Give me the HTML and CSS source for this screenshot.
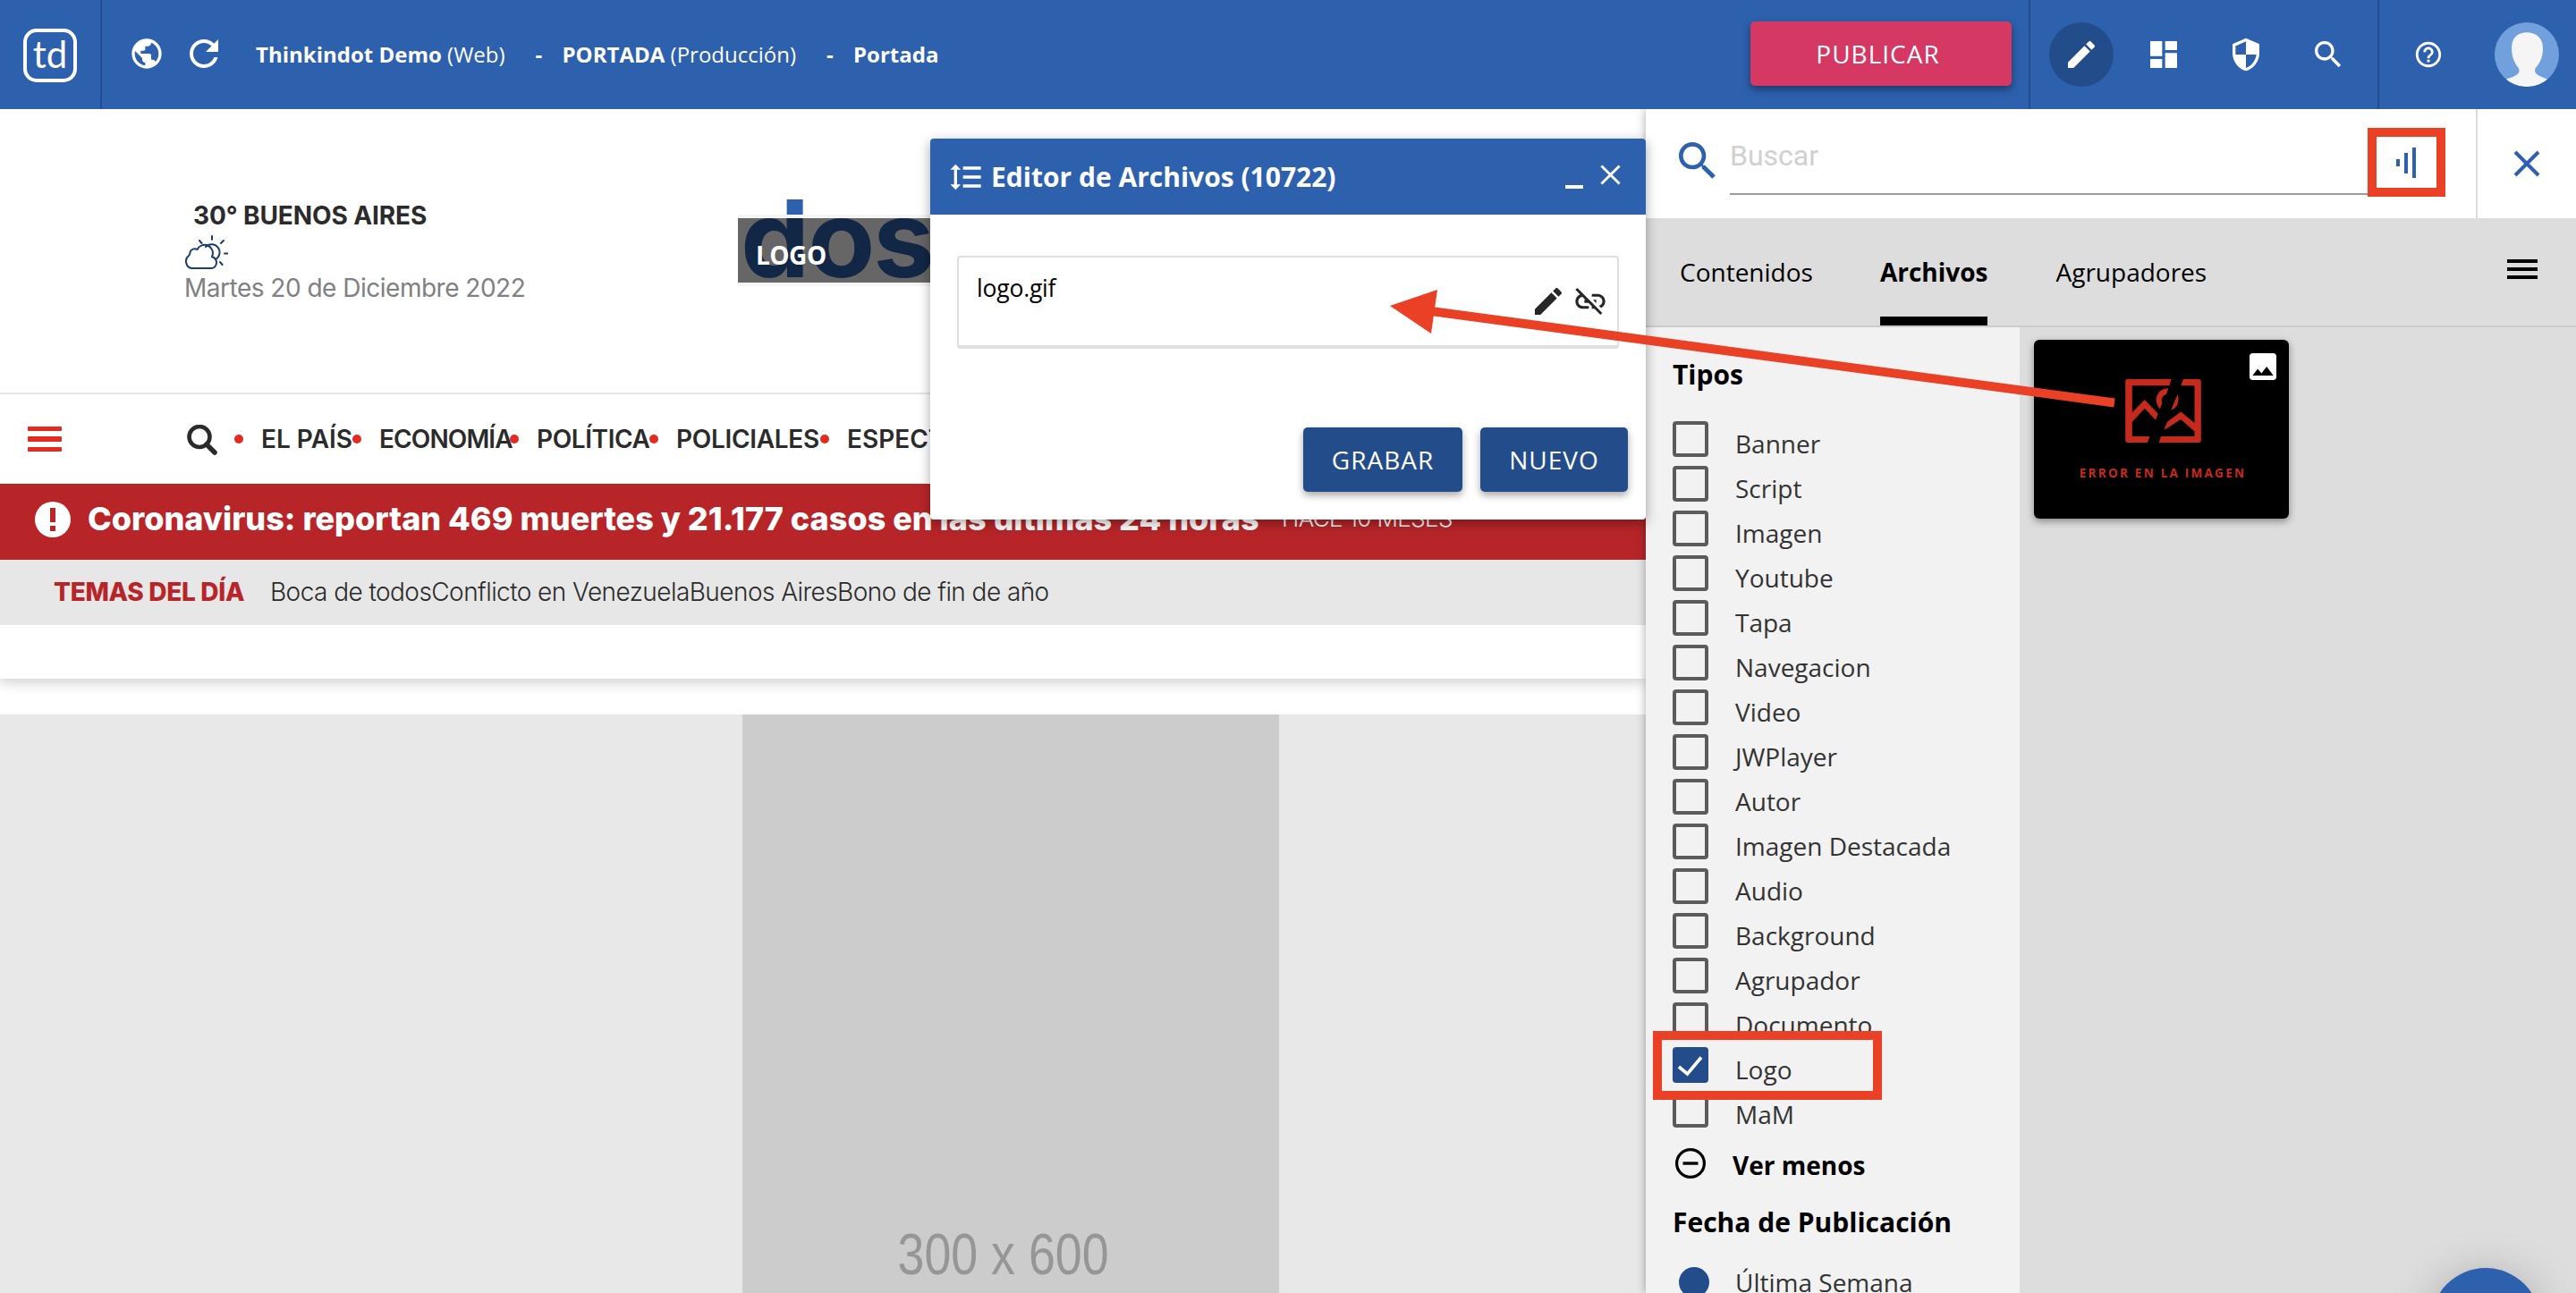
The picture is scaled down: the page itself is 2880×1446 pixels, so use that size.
FILE: index.html
```html
<!DOCTYPE html>
<html lang="es">
<head>
<meta charset="utf-8">
<title>Thinkindot Demo - Portada</title>
<link rel="stylesheet" href="styles.css">
</head>
<body>
<div class="app">
  <header class="topbar">
    <div class="brand"><div class="brand-box">td</div></div>
    <svg class="icon ic-40 globe" viewBox="0 0 24 24"><path d="M12 2C6.48 2 2 6.48 2 12s4.48 10 10 10 10-4.48 10-10S17.52 2 12 2zm-1 17.93c-3.95-.49-7-3.85-7-7.93 0-.62.08-1.21.21-1.79L9 15v1c0 1.1.9 2 2 2v1.93zm6.9-2.54c-.26-.81-1-1.39-1.9-1.39h-1v-3c0-.55-.45-1-1-1H8v-2h2c.55 0 1-.45 1-1V7h2c1.1 0 2-.9 2-2v-.41c2.93 1.19 5 4.06 5 7.41 0 2.08-.8 3.97-2.1 5.39z"/></svg>
    <svg class="icon ic-48 reload" viewBox="0 0 24 24"><path d="M17.65 6.35C16.2 4.9 14.21 4 12 4c-4.42 0-7.99 3.58-7.99 8s3.57 8 7.99 8c3.73 0 6.84-2.55 7.73-6h-2.08c-.82 2.33-3.04 4-5.65 4-3.31 0-6-2.69-6-6s2.69-6 6-6c1.66 0 3.14.69 4.22 1.78L13 11h7V4l-2.35 2.35z"/></svg>
    <nav class="crumbs">
      <span class="crumb c1"><b>Thinkindot Demo</b> (Web)</span>
      <b class="dash">-</b>
      <span class="crumb c2"><b>PORTADA</b> (Producción)</span>
      <b class="dash">-</b>
      <span class="crumb"><b>Portada</b></span>
    </nav>
    <button class="publish">PUBLICAR</button>
    <div class="tools">
      <span class="tool active"><svg class="icon ic-40" viewBox="0 0 24 24"><path d="M3 17.25V21h3.75L17.81 9.94l-3.75-3.75L3 17.25zM20.71 7.04c.39-.39.39-1.02 0-1.41l-2.34-2.34c-.39-.39-1.02-.39-1.41 0l-1.83 1.83 3.75 3.75 1.83-1.83z"/></svg></span>
      <span class="tool"><svg class="icon ic-40" viewBox="0 0 24 24"><path d="M3 13h8V3H3v10zm0 8h8v-6H3v6zm10 0h8V11h-8v10zm0-18v6h8V3h-8z"/></svg></span>
      <span class="tool"><svg class="icon ic-40" viewBox="0 0 24 24"><path d="M12 1L3 5v6c0 5.55 3.84 10.74 9 12 5.16-1.26 9-6.45 9-12V5l-9-4zm0 10.99h7c-.53 4.12-3.28 7.79-7 8.94V12H5V6.3l7-3.11v8.8z"/></svg></span>
      <span class="tool"><svg class="icon ic-40" viewBox="0 0 24 24"><path d="M15.5 14h-.79l-.28-.27C15.41 12.59 16 11.11 16 9.5 16 5.91 13.09 3 9.5 3S3 5.91 3 9.5 5.91 16 9.5 16c1.61 0 3.09-.59 4.23-1.57l.27.28v.79l5 4.99L20.49 19l-4.99-5zm-6 0C7.01 14 5 11.99 5 9.5S7.01 5 9.5 5 14 7.01 14 9.5 11.99 14 9.5 14z"/></svg></span>
    </div>
    <div class="account">
      <svg class="icon ic-34" viewBox="0 0 24 24"><path d="M11 18h2v-2h-2v2zm1-16C6.48 2 2 6.48 2 12s4.48 10 10 10 10-4.48 10-10S17.52 2 12 2zm0 18c-4.41 0-8-3.59-8-8s3.59-8 8-8 8 3.59 8 8-3.59 8-8 8zm0-14c-2.21 0-4 1.79-4 4h2c0-1.1.9-2 2-2s2 .9 2 2c0 2-3 1.75-3 5h2c0-2.25 3-2.5 3-5 0-2.21-1.79-4-4-4z"/></svg>
      <svg class="avatar" viewBox="0 0 70 70"><defs><clipPath id="face"><circle cx="35" cy="35" r="35"/></clipPath></defs><g clip-path="url(#face)"><rect width="70" height="70" fill="#72a0dc"/><path fill="#f5f5f5" d="M35 11C25 11 18.500 17 18.500 28C18.500 38 22 45 26 49.500C28.500 55 25 58 12 62L8 70H62L58 62C46 58 42 55 44.500 49.500C49 45 52.500 38 52.500 28C52.500 17 45 11 35 11z"/></g></svg>
    </div>
  </header>

  <div class="main">
    <section class="site">
      <div class="masthead">
        <div class="weather">
          <div class="place"><span>30° BUENOS AIRES</span></div>
          <svg class="sky" viewBox="0 0 50 38" fill="none" stroke="#1d3c6e" stroke-width="2" stroke-linecap="round"><path d="M9 37a8 8 0 0 1-3-14q1.500-1 1.500-4a5.500 5.500 0 0 1 8-3a9 9 0 0 1 16.500 8q5 2 5 6.500a6 6 0 0 1-6 6.500z"/><path d="M25 13a9 9 0 1 1 11 14M32 1v4M18 6l2.500 3M45 6l-3 3M46 20.500h3.500M41 30l2.500 3"/></svg>
          <div class="date"><span>Martes 20 de Diciembre 2022</span></div>
        </div>
        <div class="logo-slot">
          <div class="logo-word">dos</div>
          <div class="logo-cover">LOGO</div>
        </div>
      </div>
      <div class="sections">
        <div class="burger"><i></i><i></i><i></i></div>
        <svg class="find" viewBox="0 0 34 34" fill="none" stroke="#2b2b2b"><circle cx="14" cy="13.500" r="11.500" stroke-width="4.600"/><path d="M22 22l9 9" stroke-width="5.500" stroke-linecap="round"/></svg>
        <ul>
          <li><span>EL PAÍS</span></li>
          <li><span>ECONOMÍA</span></li>
          <li><span>POLÍTICA</span></li>
          <li><span>POLICIALES</span></li>
          <li><span>ESPECTÁCULOS</span></li>
        </ul>
      </div>
      <div class="breaking">
        <svg class="alert" viewBox="0 0 40 40"><circle cx="20" cy="20" r="20" fill="#fff"/><path fill="#b72529" d="M17 7h6v16h-6zM17 27h6v6h-6z"/></svg>
        <strong>Coronavirus: reportan 469 muertes y 21.177 casos en las últimas 24 horas</strong>
        <span class="ago">HACE 10 MESES</span>
      </div>
      <div class="topics">
        <b>TEMAS DEL DÍA</b>
        <span class="links"><span>Boca de todos</span><span>Conflicto en Venezuela</span><span>Buenos Aires</span><span>Bono de fin de año</span></span>
      </div>
      <div class="strip"></div>
      <div class="canvas"><div class="ad"><span>300 x 600</span></div></div>
    </section>

    <aside class="panel">
      <div class="search-row">
        <div class="search-box">
          <svg class="ic-56 lens" viewBox="0 0 24 24"><path d="M15.5 14h-.79l-.28-.27C15.41 12.59 16 11.11 16 9.5 16 5.91 13.09 3 9.5 3S3 5.91 3 9.5 5.91 16 9.5 16c1.61 0 3.09-.59 4.23-1.57l.27.28v.79l5 4.99L20.49 19l-4.99-5zm-6 0C7.01 14 5 11.99 5 9.5S7.01 5 9.5 5 14 7.01 14 9.500 11.99 14 9.5 14z"/></svg>
          <div class="field"><span>Buscar</span></div>
          <div class="levels"><i></i><i></i><i></i></div>
        </div>
        <div class="close-cell"><svg viewBox="0 0 30 30" class="cross"><path d="M2 2l26 26M28 2L2 28" stroke="#2d60ad" stroke-width="4" fill="none"/></svg></div>
      </div>
      <div class="tabs">
        <span>Contenidos</span><span class="on">Archivos</span><span>Agrupadores</span>
        <div class="lines"><i></i><i></i><i></i></div>
      </div>
      <div class="panel-body">
        <div class="filters">
          <h3>Tipos</h3>
          <ul class="checks">
            <li><i></i>Banner</li><li><i></i>Script</li><li><i></i>Imagen</li><li><i></i>Youtube</li>
            <li><i></i>Tapa</li><li><i></i>Navegacion</li><li><i></i>Video</li><li><i></i>JWPlayer</li>
            <li><i></i>Autor</li><li><i></i>Imagen Destacada</li><li><i></i>Audio</li><li><i></i>Background</li>
            <li><i></i>Agrupador</li><li><i></i>Documento</li>
            <li><i class="checked"><svg viewBox="0 0 40 40"><path d="M7 22l9.500 8L32 11.500" fill="none" stroke="#fff" stroke-width="3.600"/></svg></i>Logo</li>
            <li><i></i>MaM</li>
          </ul>
          <div class="less"><svg viewBox="0 0 34 34"><circle cx="17" cy="17" r="15.400" fill="none" stroke="#000" stroke-width="3.200"/><path d="M8.500 17h17" stroke="#000" stroke-width="3.400"/></svg><span>Ver menos</span></div>
          <h3 class="when">Fecha de Publicación</h3>
          <div class="radio"><i></i>Última Semana</div>
        </div>
        <div class="results">
          <div class="thumb">
            <svg class="kind" viewBox="0 0 24 24"><path fill="#fff" d="M21 19V5c0-1.100-.9-2-2-2H5c-1.100 0-2 .9-2 2v14c0 1.100.9 2 2 2h14c1.100 0 2-.9 2-2zM8.500 13.500l2.500 3.010L14.500 12l4.500 6H5l3.500-4.500z"/></svg>
            <svg class="broken" viewBox="318 143 255 214" fill="#c62a1d"><path d="M326 143H473L466 165H341V255L383 212L428 259L420 281L383 242L341 287V336H400L392 357H326Q318 357 318 349V151Q318 143 326 143z"/><path d="M513 143H565Q573 143 573 151V349Q573 357 565 357H431L438 336H551V319L505 279L448 315L459 287L505 253L551 291V165H505z"/><path d="M463 174C432 172 407 208 434 243L442 225C436 208 445 198 456 194zM494 194C502 219 492 241 472 247z"/></svg>
            <span>ERROR EN LA IMAGEN</span>
          </div>
          <div class="fab"></div>
        </div>
      </div>
    </aside>
  </div>

  <div class="dialog">
    <div class="dialog-head">
      <svg class="icon ic-40" viewBox="0 0 24 24"><path d="M6 7h2.500L5 3.500 1.500 7H4v10H1.500L5 20.500 8.500 17H6V7zm4-2v2h12V5H10zm0 14h12v-2H10v2zm0-6h12v-2H10v2z"/></svg>
      <b>Editor de Archivos (10722)</b>
      <span class="mini"></span>
      <svg class="shut" viewBox="0 0 24 24"><path d="M1.500 1.500l21 21M22.500 1.500l-21 21" stroke="#fff" stroke-width="3" fill="none"/></svg>
    </div>
    <div class="dialog-body">
      <div class="file">
        <span>logo.gif</span>
        <svg class="ic-40 pen" viewBox="0 0 24 24"><path d="M3 17.25V21h3.75L17.81 9.94l-3.75-3.75L3 17.25zM20.71 7.04c.39-.39.39-1.02 0-1.41l-2.34-2.34c-.39-.39-1.02-.39-1.41 0l-1.83 1.83 3.75 3.75 1.83-1.83z"/></svg>
        <svg class="ic-40 unlink" viewBox="0 0 24 24"><path d="M17 7h-4v1.900h4c1.710 0 3.100 1.390 3.100 3.100 0 1.430-.98 2.630-2.310 2.980l1.460 1.460C20.880 15.610 22 13.950 22 12c0-2.760-2.240-5-5-5zm-1 4h-2.190l2 2H16zM2 4.270l3.110 3.110C3.290 8.120 2 9.910 2 12c0 2.760 2.240 5 5 5h4v-1.900H7c-1.710 0-3.100-1.390-3.100-3.100 0-1.590 1.210-2.900 2.760-3.070L8.730 11H8v2h2.730L13 15.270V17h1.730l4.010 4L20 19.740 3.270 3 2 4.270z"/></svg>
      </div>
      <div class="actions"><button class="save">GRABAR</button><button class="new">NUEVO</button></div>
    </div>
  </div>

  <svg class="notes" viewBox="0 0 2880 1446" fill="none" stroke="#ea4025" stroke-width="10">
    <rect x="2652" y="148" width="77" height="67"/>
    <rect x="1853" y="1158" width="246" height="67"/>
    <path d="M2364 450.500L1600 348"/>
    <path fill="#ea4025" stroke="none" d="M1554 342L1607 324L1600 373z"/>
  </svg>
</div>
</body>
</html>
```
FILE: styles.css
```css
* { box-sizing: border-box; }
body { margin: 0; font-family: "Open Sans", sans-serif; font-size: 28px; color: #000; }
ul { list-style: none; margin: 0; padding: 0; }
h3 { margin: 0; }
button { border: 0; padding: 0; font: inherit; color: #fff; }
i { display: block; }
svg { display: block; flex: none; }
.app { position: relative; width: 2880px; height: 1446px; overflow: hidden; background: #fff; display: flex; flex-direction: column; }
.icon { fill: #fff; }
.ic-34 { width: 34px; height: 34px; }
.ic-40 { width: 40px; height: 40px; }
.ic-48 { width: 48px; height: 48px; }
.ic-56 { width: 56px; height: 56px; }

/* top bar */
.topbar { flex: none; height: 122px; display: flex; align-items: center; background: #2d60ad; color: #fff; }
.brand { width: 114px; height: 122px; border-right: 2px solid #244e8f; padding: 32px 0 0 26px; }
.brand-box { width: 60px; height: 60px; border: 4px solid #fff; border-radius: 15px; font: 400 42px/48px Lato, sans-serif; text-align: center; }
.globe { margin: 0 0 3px 30px; }
.reload { margin: 0 0 3px 20px; }
.crumbs { display: flex; margin-left: 34px; font-size: 24px; line-height: 34px; white-space: nowrap; flex: 1; }
.dash { width: 30px; }
.c1, .c2 { margin-right: 34px; }
.publish { width: 292px; height: 72px; margin-bottom: 2px; padding-right: 7px; background: #d63864; border-radius: 5px; letter-spacing: 1px; box-shadow: 0 4px 8px rgba(0,0,0,.4); }
.tools { display: flex; height: 122px; width: 390px; margin-left: 19px; border-left: 2px solid #244e8f; padding-left: 21px; gap: 20px; align-items: center; }
.tool { width: 72px; height: 72px; display: flex; align-items: center; justify-content: center; border-radius: 50%; }
.active { background: #234d8a; }
.account { display: flex; align-items: center; height: 122px; width: 222px; border-left: 2px solid #244e8f; padding-left: 38px; gap: 57px; }
.avatar { width: 72px; height: 72px; }

.main { flex: 1; display: flex; min-height: 0; }

/* newspaper page */
.site { width: 1840px; display: flex; flex-direction: column; overflow: hidden; font-family: Inter, sans-serif; color: #2b2b2b; white-space: nowrap; }
.masthead { height: 319px; border-bottom: 2px solid #e7e7e7; display: flex; }
.weather { width: 619px; margin-left: 206px; padding-top: 99px; }
.place { padding-left: 10px; font-weight: 700; line-height: 40px; font-size: 28px; letter-spacing: -.1px; }
.sky { width: 50px; height: 38px; margin: 2px 0 2px -1px; }
.date { line-height: 38px; color: #7f8083; letter-spacing: -.5px; }
.logo-slot { position: relative; width: 400px; height: 80px; margin-top: 118px; }
.logo-word { position: absolute; left: 3px; top: -45px; font-weight: 700; font-size: 119px; line-height: 144px; letter-spacing: -2px; color: #2d60ad; transform: scaleX(1.03); transform-origin: left; }
.logo-cover { position: absolute; inset: 0; background: rgba(0,0,0,.6); border: solid #f5f5f5; border-width: 4px 0; color: #fff; font: 700 28px/82px "Open Sans", sans-serif; letter-spacing: -.5px; padding-left: 20px; }
.sections { height: 100px; display: flex; align-items: center; padding-left: 31px; }
.burger { width: 38px; display: flex; flex-direction: column; gap: 6px; }
.burger i { height: 5.500px; background: #e42b22; border-radius: 1px; }
.find { width: 34px; height: 34px; margin: 2px 19px 0 140px; }
.sections ul { display: flex; font-weight: 600; line-height: 40px; }
.sections li { display: flex; align-items: center; width: 176px; letter-spacing: -.9px; }
.sections li::before { content: ""; flex: none; width: 10px; height: 10px; border-radius: 50%; background: #e42b22; margin-right: 20px; }
.sections li:nth-child(1) { width: 132px; letter-spacing: 0; }
.sections li:nth-child(3) { width: 156px; letter-spacing: -.4px; }
.sections li:nth-child(4) { width: 191px; letter-spacing: -.3px; }
.sections li:nth-child(5) { letter-spacing: 0; }
.breaking { height: 85px; background: #b72529; color: #fff; display: flex; padding-left: 39px; line-height: 78px; }
.alert { width: 40px; height: 40px; margin-top: 20px; }
.breaking strong { width: 1335px; margin-left: 19px; font-size: 36px; font-weight: 800; }
.ago { font-weight: 300; font-size: 26px; letter-spacing: -.6px; }
.topics { height: 73px; background: #e7e7e7; display: flex; line-height: 72px; padding-left: 60px; }
.topics b { color: #b72529; width: 242px; font-weight: 800; letter-spacing: -.3px; }
.links { font-weight: 300; letter-spacing: -.56px; }
.strip { height: 60px; background: #fff; box-shadow: 0 4px 14px rgba(0,0,0,.2); clip-path: inset(0 0 -30px 0); }
.canvas { margin-top: 40px; flex: 1; background: #e8e8e8; padding-left: 830px; display: flex; }
.ad { width: 600px; background: #ccc; color: #969696; display: flex; align-items: flex-end; justify-content: center; padding-bottom: 7px; font: 64px/72px "Liberation Sans", sans-serif; }
.ad span { transform: scaleX(.84); margin-right: 17px; }

/* right panel */
.panel { position: relative; width: 1040px; display: flex; flex-direction: column; background: #ddd; box-shadow: 0 0 10px rgba(0,0,0,.35); clip-path: inset(0 0 0 -20px); }
.search-row { height: 122px; background: #fff; display: flex; }
.search-box { width: 930px; border-right: 2px solid #dcdcdc; padding-left: 30px; display: flex; }
.lens { margin-top: 30px; fill: #2d60ad; }
.field { width: 750px; height: 96px; margin-left: 8px; border-bottom: 2px solid #9b9b9b; color: #d0d0d0; font: 32px/105px Roboto, sans-serif; }
.levels { display: flex; gap: 5px; align-items: center; margin-left: -5px; height: 120px; }
.levels i { width: 4px; height: 8px; background: #2d60ad; }
.levels i:nth-child(2) { height: 23px; }
.levels i:nth-child(3) { height: 34px; }
.close-cell { flex: 1; display: flex; align-items: center; justify-content: center; }
.cross { width: 30px; height: 30px; }
.tabs { flex: none; height: 122px; border-bottom: 2px solid #cbcbcb; padding: 0 43px 0 38px; display: flex; line-height: 120px; }
.tabs span { margin-right: 75px; }
.tabs .on { font-weight: 700; border-bottom: 10px solid #000; margin-right: 76px; }
.lines { margin: 46px 0 0 auto; width: 34px; display: flex; flex-direction: column; gap: 5px; }
.lines i { height: 4px; background: #000; }
.panel-body { flex: 1; display: flex; min-height: 0; }
.filters { width: 418px; background: #f2f2f2; padding: 32px 0 0 30px; color: #333; white-space: nowrap; overflow: hidden; }
.filters h3 { font-size: 30px; line-height: 41px; color: #000; }
.checks { margin-top: 32px; }
.checks li { height: 50px; line-height: 50px; display: flex; gap: 30px; }
.checks i { width: 40px; height: 40px; border: 4px solid #5b5b5b; border-radius: 4px; }
.checks .checked { background: #234d8a; border: 0; }
.less { height: 60px; display: flex; align-items: center; font-weight: 700; color: #000; gap: 30px; padding-left: 3px; }
.less span { line-height: 40px; padding-top: 4px; }
.less svg { width: 34px; height: 34px; }
.filters .when { margin-top: 15px; }
.radio { display: flex; align-items: center; gap: 29px; padding-left: 7px; height: 60px; line-height: 60px; margin-top: 17px; }
.radio i { width: 34px; height: 34px; border-radius: 50%; background: #234d8a; }
.results { position: relative; flex: 1; padding: 14px 16px; }
.thumb { position: relative; width: 285px; height: 200px; background: #000; border-radius: 6px; box-shadow: 0 3px 8px rgba(0,0,0,.4); padding-top: 44px; display: flex; flex-direction: column; align-items: center; }
.broken { width: 85px; height: 71px; margin-left: 4px; }
.thumb span { margin: 24px 0 0 3px; color: #c62a1d; font-weight: 700; font-size: 13.600px; line-height: 19px; letter-spacing: 2.200px; }
.kind { position: absolute; right: 9px; top: 10px; width: 40px; height: 40px; }
.fab { position: absolute; left: 460px; top: 1052px; width: 122px; height: 122px; border-radius: 50%; background: #2d60ad; box-shadow: 0 8px 50px rgba(0,0,0,.25); }

/* floating file editor */
.dialog { position: absolute; left: 1040px; top: 155px; width: 800px; height: 426px; background: #fff; border-radius: 4px; box-shadow: 0 4px 14px rgba(0,0,0,.35); }
.dialog-head { height: 85px; background: #2d60ad; color: #fff; border-radius: 4px 4px 0 0; display: flex; align-items: center; padding-left: 20px; font-size: 30px; }
.dialog-head b { margin-left: 8px; flex: 1; line-height: 86px; }
.mini { width: 20px; height: 4px; background: #fff; margin: 22px 19px 0 0; }
.shut { width: 23px; height: 23px; margin: 0 28px 5px 0; }
.dialog-body { padding: 46px 20px 0 30px; }
.file { width: 740px; height: 104px; border: 2px solid #dedede; border-bottom-width: 4px; border-radius: 4px; display: flex; padding-left: 20px; line-height: 68px; font-size: 26.500px; letter-spacing: -.2px; }
.file span { flex: 1; }
.file svg { fill: #262626; margin-top: 29px; }
.pen { margin-right: 7px; }
.unlink { margin-right: 10px; }
.actions { display: flex; justify-content: flex-end; gap: 20px; margin-top: 88px; }
.actions button { height: 72px; background: #234d8a; border-radius: 5px; letter-spacing: 1px; box-shadow: 0 4px 8px rgba(0,0,0,.35); }
.save { width: 178px; }
.new { width: 165px; }

/* callouts drawn over the interface */
.notes { position: absolute; left: 0; top: 0; width: 2880px; height: 1446px; }
```
